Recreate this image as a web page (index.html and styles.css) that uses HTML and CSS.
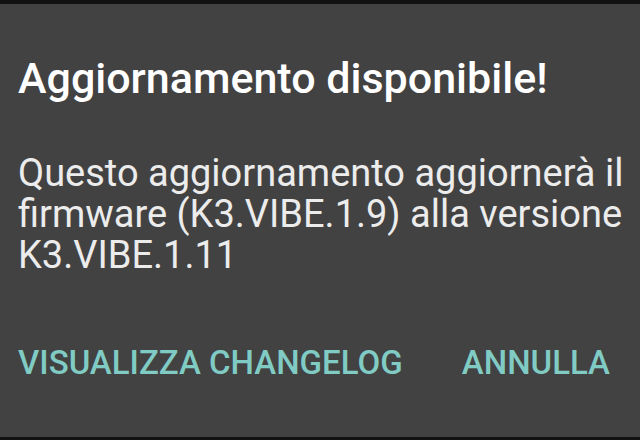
FILE: index.html
```html
<!DOCTYPE html>
<html lang="it">
<head>
<meta charset="utf-8">
<link rel="stylesheet" href="styles.css">
</head>
<body>
<div class="screen">
  <div class="topbar"></div>
  <div class="dialog">
    <h1 class="title">Aggiornamento disponibile!</h1>
    <p class="message">Questo aggiornamento aggiornerà il firmware (K3.VIBE.1.9) alla versione K3.VIBE.1.11</p>
    <div class="actions">
      <span class="btn">VISUALIZZA CHANGELOG</span>
      <span class="btn">ANNULLA</span>
    </div>
  </div>
  <div class="bottombar"></div>
</div>
</body>
</html>
```
FILE: styles.css
```css
html, body {
  margin: 0;
  padding: 0;
  background: #424242;
}
.screen {
  width: 640px;
  height: 440px;
  display: flex;
  flex-direction: column;
  background: #424242;
  overflow: hidden;
  font-family: Roboto, "Noto Sans", sans-serif;
}
.topbar {
  height: 4px;
  background: #121212;
  flex: none;
}
.dialog {
  flex: 1;
  padding: 0 0 0 18px;
  display: flex;
  flex-direction: column;
}
.title {
  margin: 49px 0 0;
  font-size: 43px;
  font-weight: 500;
  line-height: 50px;
  color: #ffffff;
}
.message {
  margin: 50px 0 0;
  font-size: 38px;
  line-height: 41px;
  color: #ececec;
}
.actions {
  margin-top: 67px;
  display: flex;
  justify-content: space-between;
  padding-right: 30px;
}
.btn {
  font-size: 33px;
  font-weight: 500;
  color: #80cbc4;
  line-height: 40px;
}
.bottombar {
  height: 3px;
  background: #121212;
  flex: none;
}
```
